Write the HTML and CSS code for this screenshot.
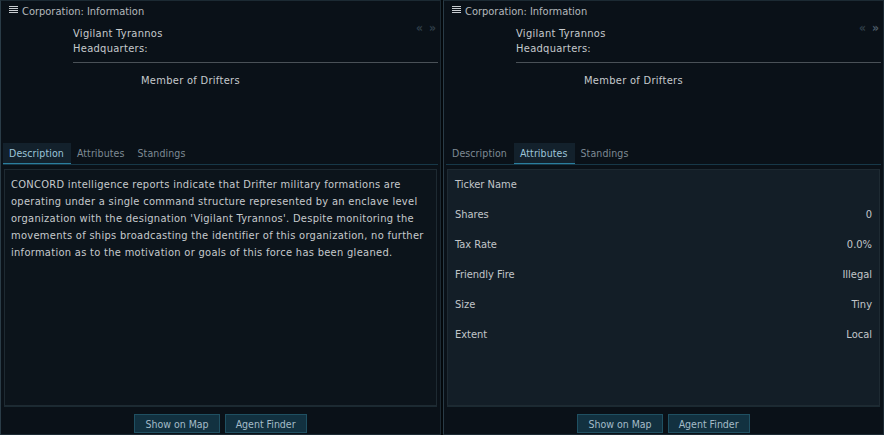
FILE: index.html
```html
<!DOCTYPE html>
<html>
<head>
<meta charset="utf-8">
<link rel="stylesheet" href="styles.css">
</head>
<body>
<div class="desk">
  <section class="win">
    <header class="titlebar">
      <svg class="menu" width="9" height="8" viewBox="0 0 9 8"><rect x="0" y="0" width="9" height="1" fill="#c8ccd0"/><rect x="0" y="2" width="9" height="1" fill="#c8ccd0"/><rect x="0" y="4" width="9" height="1" fill="#c8ccd0"/><rect x="0" y="6" width="9" height="1" fill="#c8ccd0"/></svg>
      <span class="title">Corporation: Information</span>
    </header>
    <div class="info">
      <div class="nav"><span>«</span><span>»</span></div>
      <div class="name">Vigilant Tyrannos</div>
      <div class="name">Headquarters:</div>
      <div class="rule"></div>
      <div class="member">Member of Drifters</div>
    </div>
    <nav class="tabs">
      <span class="tab active">Description</span>
      <span class="tab">Attributes</span>
      <span class="tab">Standings</span>
    </nav>
    <div class="panel desc">
      <p>CONCORD intelligence reports indicate that Drifter military formations are operating under a single command structure represented by an enclave level organization with the designation 'Vigilant Tyrannos'. Despite monitoring the movements of ships broadcasting the identifier of this organization, no further information as to the motivation or goals of this force has been gleaned.</p>
    </div>
    <footer class="actions">
      <button class="btn">Show on Map</button>
      <button class="btn">Agent Finder</button>
    </footer>
  </section>
  <section class="win">
    <header class="titlebar">
      <svg class="menu" width="9" height="8" viewBox="0 0 9 8"><rect x="0" y="0" width="9" height="1" fill="#c8ccd0"/><rect x="0" y="2" width="9" height="1" fill="#c8ccd0"/><rect x="0" y="4" width="9" height="1" fill="#c8ccd0"/><rect x="0" y="6" width="9" height="1" fill="#c8ccd0"/></svg>
      <span class="title">Corporation: Information</span>
    </header>
    <div class="info">
      <div class="nav"><span>«</span><span class="on">»</span></div>
      <div class="name">Vigilant Tyrannos</div>
      <div class="name">Headquarters:</div>
      <div class="rule"></div>
      <div class="member">Member of Drifters</div>
    </div>
    <nav class="tabs">
      <span class="tab">Description</span>
      <span class="tab active">Attributes</span>
      <span class="tab">Standings</span>
    </nav>
    <div class="panel attrs">
      <div class="row"><span>Ticker Name</span><span></span></div>
      <div class="row"><span>Shares</span><span>0</span></div>
      <div class="row"><span>Tax Rate</span><span>0.0%</span></div>
      <div class="row"><span>Friendly Fire</span><span>Illegal</span></div>
      <div class="row"><span>Size</span><span>Tiny</span></div>
      <div class="row"><span>Extent</span><span>Local</span></div>
    </div>
    <footer class="actions">
      <button class="btn">Show on Map</button>
      <button class="btn">Agent Finder</button>
    </footer>
  </section>
</div>
</body>
</html>
```
FILE: styles.css
```css
* { box-sizing: border-box; }
html, body { margin: 0; padding: 0; }
body {
  background: #03070a;
  width: 884px;
  height: 435px;
  overflow: hidden;
  font-family: "DejaVu Sans Condensed", "DejaVu Sans", sans-serif;
  font-size: 11px;
  color: #c4c8cc;
}
.desk {
  display: flex;
  gap: 2px;
  height: 435px;
}
.win {
  width: 441px;
  height: 435px;
  background: #0a1118;
  border: 1px solid #1c2a33;
  border-left-color: #2a3c47;
  display: flex;
  flex-direction: column;
}
.titlebar {
  height: 21px;
  display: flex;
  align-items: center;
  padding-left: 8px;
  padding-bottom: 1px;
  gap: 4px;
}
.menu { margin-top: -2px; }
.title { color: #b4b8bc; }
.info {
  position: relative;
  height: 120px;
  padding-top: 4px;
  padding-left: 72px;
  padding-right: 2px;
}
.nav {
  position: absolute;
  right: 4px;
  top: -1px;
  display: flex;
  gap: 6px;
  color: #2e3d47;
  font-size: 12px;
  font-weight: bold;
}
.nav .on { color: #4a5a66; }
.name { line-height: 15px; color: #c6cacd; letter-spacing: 0.3px; }
.rule {
  height: 1px;
  background: #4a5157;
  margin-top: 6px;
}
.member {
  margin-top: 11px;
  padding-left: 68px;
  color: #c6cacd;
  letter-spacing: 0.3px;
}
.tabs {
  display: flex;
  height: 23px;
  margin: 0 2px;
  border-bottom: 1px solid #173848;
}
.tab {
  padding: 0 7px 0 6px;
  line-height: 20px;
  height: 20px;
  margin-top: 1px;
  font-size: 10.5px;
  color: #7e8a94;
  letter-spacing: 0.1px;
}
.tab.active {
  background: #13212c;
  color: #9cc4d8;
  box-shadow: inset 0 -2px 0 -1px #2b7e9e;
  height: 21px;
}
.panel {
  margin: 4px 3px 0 3px;
  height: 237px;
  border: 1px solid #1e2a32;
}
.desc { background: #0c141b; }
.desc p {
  margin: 0;
  padding: 6px 6px 0 6px;
  line-height: 17px;
  color: #c6cacd;
  letter-spacing: 0.3px;
}
.attrs { background: #131e27; padding-top: 8px; }
.row {
  display: flex;
  justify-content: space-between;
  height: 30px;
  padding: 0 7px 0 7px;
  line-height: 14px;
  color: #c2c6ca;
}
.actions {
  display: flex;
  justify-content: center;
  gap: 5px;
  padding-top: 7px;
  border-top: 1px solid #1b2a32;
  margin: 0 3px;
}
.btn {
  font: inherit;
  font-size: 10.5px;
  height: 19px;
  padding: 0 10px;
  background: #123140;
  border: 1px solid #1f5062;
  color: #a4bcc8;
}
```
